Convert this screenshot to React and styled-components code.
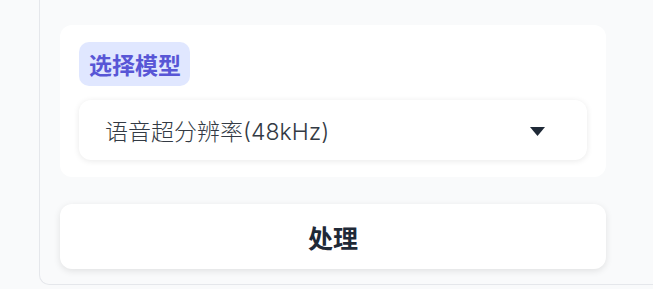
import React from 'react'
import styled, { createGlobalStyle } from 'styled-components';

const GlobalStyle = createGlobalStyle`
  html, body {
    margin: 0;
    padding: 0;
    background: #f9fafb;
    overflow: hidden;
  }
  body {
    font-family: Inter, "Noto Sans CJK SC", sans-serif;
  }
`;

const Panel = styled.div`
  margin-left: 39px;
  box-sizing: border-box;
  padding: 25px 20px 15px 20px;
  background: #f9fafb;
  border-left: 1px solid #e5e7eb;
  border-bottom: 1px solid #e5e7eb;
  border-bottom-left-radius: 10px;
  display: flex;
  flex-direction: column;
  gap: 27px;
`;

const Card = styled.div`
  width: 546px;
  box-sizing: border-box;
  background: #ffffff;
  border-radius: 12px;
  padding: 17px 19px 17px 19px;
  display: flex;
  flex-direction: column;
  align-items: flex-start;
  gap: 14px;
`;

const Badge = styled.span`
  display: inline-block;
  background: #e0e7ff;
  color: #5856d6;
  font-family: "Noto Sans CJK SC", sans-serif;
  font-weight: 700;
  font-size: 23px;
  line-height: 28px;
  padding: 8px 9px 8px 10px;
  border-radius: 10px;
`;

const Select = styled.div`
  align-self: stretch;
  height: 60px;
  box-sizing: border-box;
  background: #ffffff;
  border-radius: 12px;
  box-shadow: 0 1px 6px rgba(0, 0, 0, 0.09);
  display: flex;
  align-items: center;
  justify-content: space-between;
  padding: 0 42px 0 26px;
  color: #333a44;
  font-size: 23px;
  font-weight: 300;
`;

const Caret = styled.svg`
  width: 15px;
  height: 9px;
  fill: #1f2937;
  margin-top: 2px;
`;

const Button = styled.button`
  width: 546px;
  height: 65px;
  border: none;
  background: #ffffff;
  border-radius: 12px;
  box-shadow: 0 2px 7px rgba(0, 0, 0, 0.1);
  font-family: "Noto Sans CJK SC", sans-serif;
  font-size: 25px;
  font-weight: 700;
  color: #1f2937;
  cursor: pointer;
`;

export default function App() {
  return (
    <>
      <GlobalStyle />
      <Panel>
        <Card>
          <Badge>选择模型</Badge>
          <Select>
            <span>语音超分辨率(48kHz)</span>
            <Caret viewBox="0 0 15 9">
              <path d="M0 0 L15 0 L7.5 9 Z" />
            </Caret>
          </Select>
        </Card>
        <Button>处理</Button>
      </Panel>
    </>
  )
}
